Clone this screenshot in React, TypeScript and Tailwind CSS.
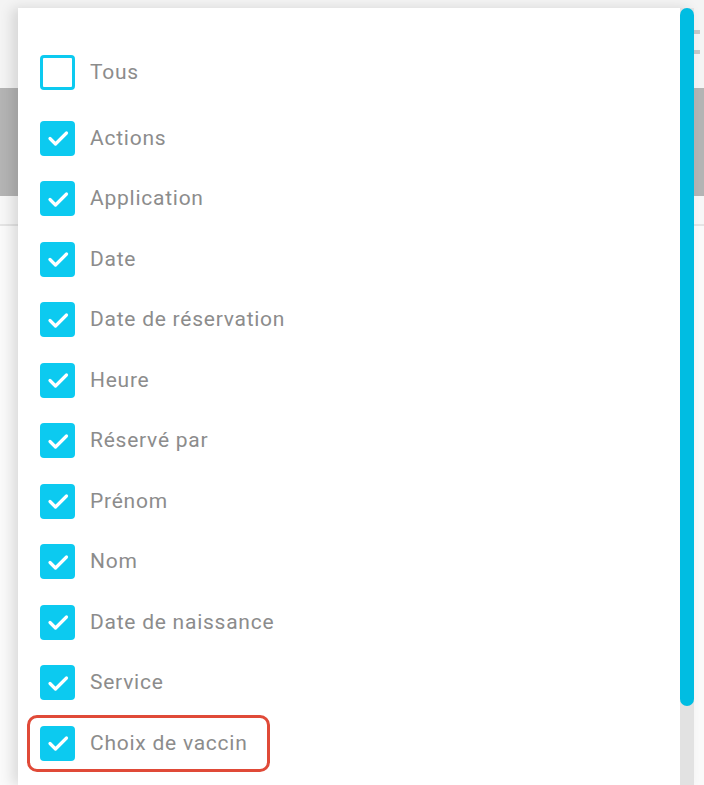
const columns = [
  "Actions",
  "Application",
  "Date",
  "Date de réservation",
  "Heure",
  "Réservé par",
  "Prénom",
  "Nom",
  "Date de naissance",
  "Service",
  "Choix de vaccin",
];

function Box({ checked }: { checked: boolean }) {
  if (!checked) {
    return <div className="w-[35px] h-[35px] rounded-[4px] border-[3px] border-[#0ccaf0] bg-white shrink-0" />;
  }
  return (
    <div className="w-[35px] h-[35px] rounded-[4px] bg-[#0ccaf0] flex items-center justify-center shrink-0">
      <svg width="24" height="24" viewBox="0 0 24 24" fill="none">
        <path d="M4 12.5 L9.5 18 L20.5 7" stroke="white" strokeWidth="3.2" strokeLinecap="round" strokeLinejoin="round" />
      </svg>
    </div>
  );
}

function Row({ label, checked }: { label: string; checked: boolean }) {
  return (
    <div className="h-[60.5px] flex items-center gap-[15px]">
      <Box checked={checked} />
      <span className="text-[21px] text-[#8c8c8c] tracking-[0.75px]">{label}</span>
    </div>
  );
}

export default function App() {
  return (
    <div className="relative w-[704px] h-[785px] overflow-hidden bg-white" style={{ fontFamily: "Roboto, 'Liberation Sans', sans-serif" }}>
      {/* page behind the dropdown */}
      <div className="flex flex-col h-full">
        <div className="h-[88px] bg-[#f4f4f4] relative">
          <div className="absolute right-[4px] top-[30px] w-[6px] h-[24px] border-y-[4px] border-[#c8c8c8]" />
        </div>
        <div className="h-[108px] bg-[#b4b4b4]" />
        <div className="h-[30px] bg-[#f7f7f7] border-b-2 border-[#e4e4e4]" />
        <div className="flex-1 bg-[#fafafa]" />
      </div>

      {/* dropdown panel */}
      <div className="absolute left-[18px] top-[8px] right-[10px] bottom-0 bg-white shadow-[-6px_0_12px_rgba(0,0,0,0.12)] flex">
        <div className="flex-1 relative pl-[22px] pt-[34px]">
          <div className="mb-[5.5px]">
            <Row label="Tous" checked={false} />
          </div>
          {columns.map((c) => (
            <Row key={c} label={c} checked />
          ))}
          <div className="absolute left-[9px] top-[707px] w-[243px] h-[57px] rounded-[10px] border-[3px] border-[#e04a38]" />
        </div>
        <div className="w-[14px] bg-[#e2e2e2] flex flex-col">
          <div className="h-[698px] rounded-full bg-[#00bde2]" />
        </div>
      </div>
    </div>
  );
}
